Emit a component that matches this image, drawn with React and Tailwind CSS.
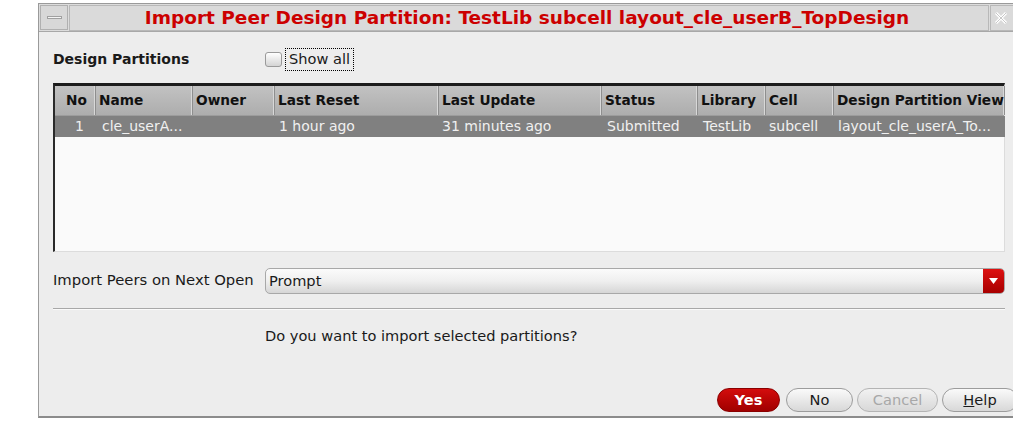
import React from "react";

const cols = [
  { label: "No", w: 41 },
  { label: "Name", w: 97 },
  { label: "Owner", w: 82 },
  { label: "Last Reset", w: 164 },
  { label: "Last Update", w: 163 },
  { label: "Status", w: 96 },
  { label: "Library", w: 68 },
  { label: "Cell", w: 68 },
  { label: "Design Partition View", w: 171 },
];

const row = ["1", "cle_userA...", "", "1 hour ago", "31 minutes ago", "Submitted", "TestLib", "subcell", "layout_cle_userA_To..."];
const rowAlign = ["pl-[20px]", "pl-[6px]", "pl-[6px]", "pl-[4px]", "pl-[3px]", "pl-[5px]", "pl-[5px]", "pl-[3px]", "pl-[4px]"];

export default function App() {
  return (
    <div
      className="w-[1013px] h-[423px] bg-white overflow-hidden relative"
      style={{ fontFamily: '"DejaVu Sans", "Liberation Sans", sans-serif' }}
    >
      <div className="absolute left-[38px] top-[3px] w-[1000px] h-[415px] border border-[#9a9a9a] border-b-[2px] border-b-[#8c8c8c] bg-[#ededed] flex flex-col">
        {/* title bar */}
        <div className="h-[28px] flex items-stretch border-b border-[#a8a8a8] bg-[#dcdcdc]">
          <div className="w-[28px] ml-[1px] mt-[1px] mb-[1px] border border-[#b0b0b0] bg-[#d8d8d8] flex items-center justify-center">
            <div className="w-[15px] h-[3px] bg-[#f4f4f4] border border-[#a0a0a0]" />
          </div>
          <div className="flex-1 ml-[1px] mt-[1px] border border-[#b8b8b8] bg-[#dadada] flex items-center justify-center pr-[4px]">
            <span className="text-[18.5px] font-bold text-[#cc0000]">
              Import Peer Design Partition: TestLib subcell layout_cle_userB_TopDesign
            </span>
          </div>
          <div className="w-[47px] ml-[1px] mt-[1px] border border-[#b8b8b8] bg-[#dadada] flex items-center pl-[3px]">
            <svg width="14" height="14" viewBox="0 0 14 14">
              <path d="M2 2 L12 12 M12 2 L2 12" stroke="#ffffff" strokeWidth="3" />
              <path d="M2 2 L12 12 M12 2 L2 12" stroke="#c8c8c8" strokeWidth="1" />
            </svg>
          </div>
        </div>

        {/* body */}
        <div className="flex-1 flex flex-col pl-[14px] pr-[32px]">
          <div className="flex items-center h-[24px] mt-[15px]">
            <span className="w-[212px] text-[14px] font-bold text-[#1a1a1a]">Design Partitions</span>
            <div className="w-[17px] h-[15px] rounded-[3px] border border-[#9a9a9a] bg-gradient-to-b from-[#ffffff] to-[#d4d4d4]" />
            <div className="ml-[3px] h-[23px] px-[3px] flex items-center border border-dotted border-black text-[14.6px] text-[#1a1a1a]">
              Show all
            </div>
          </div>

          {/* table */}
          <div className="mt-[12px] h-[169px] border-t-[3px] border-l-[2px] border-t-[#1c1c1c] border-l-[#2a2a2a] border-r border-r-[#dcdcdc] border-b border-b-[#dcdcdc] bg-[#fafafa]">
            <div className="flex h-[30px] bg-gradient-to-b from-[#c2c2c2] to-[#adadad] border-b border-[#9c9c9c]">
              {cols.map((c, i) => (
                <div
                  key={i}
                  style={{ width: c.w }}
                  className="shrink-0 flex items-center pl-[3px] text-[13.7px] font-bold text-[#111] border-r border-[#8e8e8e] shadow-[inset_-1px_0_0_#d8d8d8] whitespace-nowrap overflow-hidden"
                >
                  {i === 0 ? <span className="pl-[8px]">{c.label}</span> : c.label}
                </div>
              ))}
            </div>
            <div className="flex h-[21px] bg-[#808080] w-[950px]">
              {cols.map((c, i) => (
                <div
                  key={i}
                  style={{ width: c.w }}
                  className={`shrink-0 flex items-center text-[14px] text-[#f0f0f0] whitespace-nowrap overflow-hidden ${rowAlign[i]}`}
                >
                  {row[i]}
                </div>
              ))}
            </div>
          </div>

          {/* import peers */}
          <div className="mt-[15px] flex items-center h-[27px]">
            <span className="w-[212px] text-[14.8px] text-[#1a1a1a] whitespace-nowrap">Import Peers on Next Open</span>
            <div className="flex-1 h-[26px] rounded-[5px] border border-[#a8a8a8] bg-gradient-to-b from-[#fbfbfb] via-[#efefef] to-[#d6d6d6] flex items-center overflow-hidden">
              <span className="flex-1 pl-[3px] text-[14.6px] text-[#1a1a1a]">Prompt</span>
              <div className="w-[21px] h-full bg-gradient-to-b from-[#dd1111] to-[#a80000] flex items-center justify-center">
                <svg width="9" height="6" viewBox="0 0 9 6">
                  <path d="M0 0 H9 L4.5 6 Z" fill="#ffffff" />
                </svg>
              </div>
            </div>
          </div>

          <div className="mt-[14px] h-[2px] border-t border-[#a8a8a8] border-b border-b-[#fafafa]" />

          <div className="mt-[15px] pl-[212px] text-[14.6px] text-[#1a1a1a]">
            Do you want to import selected partitions?
          </div>

          <div className="flex-1" />

          <div className="flex justify-end items-center mb-[4px] -mr-[13px]">
            <div className="w-[63px] h-[24px] rounded-full bg-gradient-to-b from-[#d40d0d] to-[#a00000] border border-[#8a0000] flex items-center justify-center text-[14.6px] font-bold text-white">
              Yes
            </div>
            <div className="ml-[6px] w-[67px] h-[24px] rounded-full bg-gradient-to-b from-[#fafafa] to-[#d8d8d8] border border-[#9c9c9c] flex items-center justify-center text-[14.6px] text-[#1a1a1a]">
              No
            </div>
            <div className="ml-[4px] w-[81px] h-[24px] rounded-full bg-gradient-to-b from-[#f2f2f2] to-[#d8d8d8] border border-[#b4b4b4] flex items-center justify-center text-[14.6px] text-[#a8a8a8]">
              Cancel
            </div>
            <div className="ml-[4px] w-[76px] h-[24px] rounded-full bg-gradient-to-b from-[#fafafa] to-[#d8d8d8] border border-[#9c9c9c] flex items-center justify-center text-[14.6px] text-[#1a1a1a]">
              <span><span className="underline">H</span>elp</span>
            </div>
          </div>
        </div>
      </div>
    </div>
  );
}
